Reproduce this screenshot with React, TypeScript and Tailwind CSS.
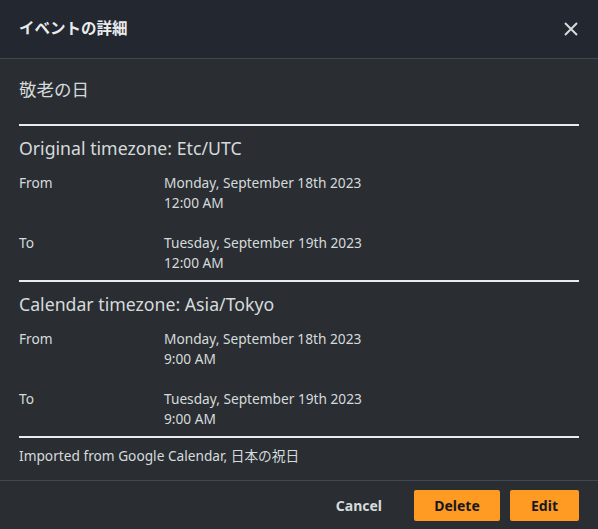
const font = { fontFamily: '"Noto Sans", "Noto Sans CJK JP", sans-serif' };

interface Row {
  label: string;
  date: string;
  time: string;
}

function Section({ title, rows }: { title: string; rows: Row[] }) {
  return (
    <div className="pt-[10px]">
      <h3 className="text-[17.7px] leading-6 text-[#d5dbdb]">{title}</h3>
      <div className="mt-[13px] flex flex-col gap-5">
        {rows.map((r, i) => (
          <div key={i} className="flex text-[13.7px] leading-5 text-[#d5dbdb]">
            <div className="w-[145px] shrink-0">{r.label}</div>
            <div>
              <div>{r.date}</div>
              <div>{r.time}</div>
            </div>
          </div>
        ))}
      </div>
    </div>
  );
}

export default function App() {
  return (
    <div className="w-[598px] h-[529px] bg-[#2a2e33] flex flex-col" style={font}>
      <div className="h-[59px] shrink-0 bg-[#232730] border-b border-[#414750] flex items-center justify-between pl-[19px] pr-[20px]">
        <h2 className="text-[15.5px] font-bold text-[#e9ebed]">イベントの詳細</h2>
        <svg width="14" height="14" viewBox="0 0 14 14" className="text-[#d5dbdb]">
          <path d="M1 1 L13 13 M13 1 L1 13" stroke="currentColor" strokeWidth="2" />
        </svg>
      </div>
      <div className="px-[19px] flex-1">
        <div className="pt-[19px] pb-[23px] text-[17.5px] leading-[23px] text-[#d5dbdb]">敬老の日</div>
        <div className="border-t-2 border-[#e9ebed]" />
        <Section
          title="Original timezone: Etc/UTC"
          rows={[
            { label: "From", date: "Monday, September 18th 2023", time: "12:00 AM" },
            { label: "To", date: "Tuesday, September 19th 2023", time: "12:00 AM" },
          ]}
        />
        <div className="mt-[7px] border-t-2 border-[#e9ebed]" />
        <Section
          title="Calendar timezone: Asia/Tokyo"
          rows={[
            { label: "From", date: "Monday, September 18th 2023", time: "9:00 AM" },
            { label: "To", date: "Tuesday, September 19th 2023", time: "9:00 AM" },
          ]}
        />
        <div className="mt-[7px] border-t-2 border-[#e9ebed]" />
        <div className="pt-[8px] text-[13.7px] leading-5 text-[#d5dbdb]">Imported from Google Calendar, 日本の祝日</div>
      </div>
      <div className="h-[49px] shrink-0 border-t border-[#414750] flex items-start justify-end pt-[9px] pr-[19px] gap-[10px]">
        <button className="h-[31px] pr-[22px] text-[14px] font-bold text-[#d5dbdb]">Cancel</button>
        <button className="h-[31px] w-[86px] rounded-[2px] bg-[#ff9a22] text-[14px] font-bold text-[#16191f]">Delete</button>
        <button className="h-[31px] w-[69px] rounded-[2px] bg-[#ff9a22] text-[14px] font-bold text-[#16191f]">Edit</button>
      </div>
    </div>
  );
}
